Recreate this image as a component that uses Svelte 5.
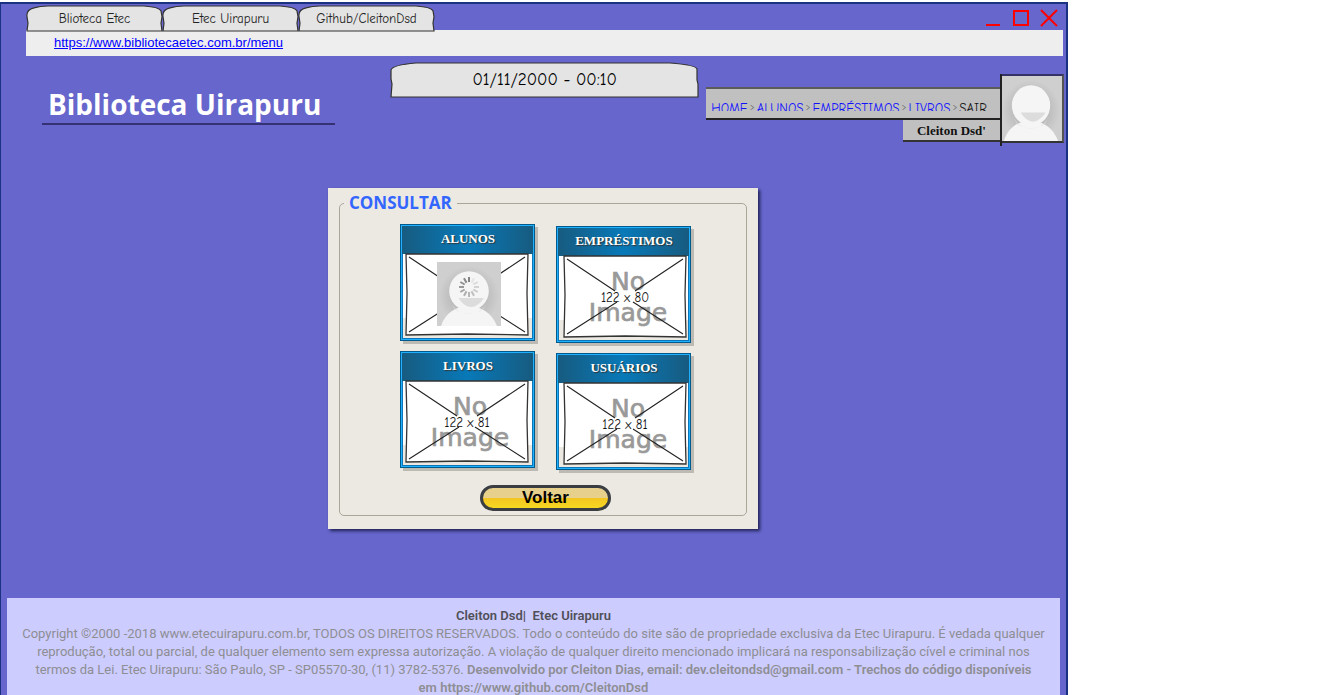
<script>
  const tabs = ['Blioteca Etec', 'Etec Uirapuru', 'Github/CleitonDsd'];
  const links = ['HOME', 'ALUNOS', 'EMPRÉSTIMOS', 'LIVROS'];
  const columns = [
    [
      { title: 'ALUNOS', avatar: true },
      { title: 'LIVROS', size: '122 x 81' }
    ],
    [
      { title: 'EMPRÉSTIMOS', size: '122 x 80' },
      { title: 'USUÁRIOS', size: '122 x 81' }
    ]
  ];
  const spokes = [0, 1, 2, 3, 4, 5, 6, 7, 8, 9, 10, 11];
</script>

{#snippet person(loading)}
  <svg class="person" viewBox="0 0 64 64" preserveAspectRatio="none" aria-hidden="true">
    <defs>
      <radialGradient id="glow" cx="32" cy="34" r="30" gradientUnits="userSpaceOnUse">
        <stop offset="0.6" stop-color="#bdbdbd" />
        <stop offset="1" stop-color="#cfcfcf" />
      </radialGradient>
    </defs>
    <rect width="64" height="64" fill="url(#glow)" />
    <path d="M4 64C8 51 19 44 31.500 44S55 51 60 64Z" fill="#f5f5f5" />
    <path d="M13 38A20 20 0 0 0 51 38L47 47Q32 56 17 47Z" fill="#dedede" opacity=".6" />
    <circle cx="32" cy="29" r="19.800" fill="#f5f5f5" />
    <path d="M21.500 36H47C43 42 38 45 34 45S25 42 21.500 36Z" fill="#dcdcdc" />
    {#if loading}
      {#each spokes as i}
        <rect x="31" y="15" width="2" height="5" fill="#666" opacity={i === 0 ? 0.8 : 0.05 + i * 0.065} transform={`rotate(${i * 30} 32 25)`} />
      {/each}
    {/if}
  </svg>
{/snippet}

<div class="window">
  <div class="titlebar">
    <div class="tabs">
      {#each tabs as tab}
        <button class="tab">
          <svg viewBox="0 0 137 28" preserveAspectRatio="none" aria-hidden="true">
            <path d="M1 27L2 19L1 12Q0 5 8 3Q14 1 22 1L118 1Q133 2 135 6L136 12L135 19L136 27Z" />
          </svg>
          <span>{tab}</span>
        </button>
      {/each}
    </div>
    <div class="controls">
      <button aria-label="Minimizar"><svg viewBox="0 0 18 18"><path d="M2 16H16" /></svg></button>
      <button aria-label="Maximizar"><svg viewBox="0 0 18 18"><path d="M2 2H16V16H2Z" /></svg></button>
      <button aria-label="Fechar"><svg viewBox="0 0 18 18"><path d="M1 1L17 17M17 1L1 17" /></svg></button>
    </div>
  </div>
  <div class="address"><a href="#menu">https://www.bibliotecaetec.com.br/menu</a></div>

  <header>
    <h1>Biblioteca Uirapuru</h1>
    <div class="clock">
      <svg viewBox="0 0 309 36" preserveAspectRatio="none" aria-hidden="true">
        <path d="M1 35L2 22L1 17L1 8Q2 3 26 1L280 1Q306 3 307 7L307 18L308 22L308 35Z" />
      </svg>
      <time>01/11/2000 - 00:10</time>
    </div>
    <div class="user">
      <div class="userinfo">
        <nav>
          <div class="trail">
            {#each links as link}<a href={'#' + link.toLowerCase()}>{link}</a><i>&gt;</i>{/each}<a class="exit" href="#sair">SAIR</a>
          </div>
        </nav>
        <strong>Cleiton Dsd'</strong>
      </div>
      <div class="photo">{@render person(false)}</div>
    </div>
  </header>

  <main>
    <section class="panel">
      <fieldset>
        <legend>CONSULTAR</legend>
        <div class="columns">
          {#each columns as column}
            <div class="column">
              {#each column as card}
                <a class="card" href={'#' + card.title.toLowerCase()}>
                  <h2>{card.title}</h2>
                  <div class="picture">
                    <svg class="frame" viewBox="0 0 124 84" aria-hidden="true">
                      <path class="edge" d="M1 1H123L122 40L123 82L62 81L1 82L2 40Z" />
                      {#if !card.avatar}
                        <text class="big" x="65" y="35">No</text>
                        <text class="big" x="65" y="66">Image</text>
                      {/if}
                      <path class="cross" d="M4 4L52 36M120 4L72 36M4 79L54 47M120 79L70 47" />
                      {#if card.size}<text class="size" x="62" y="47">{card.size}</text>{/if}
                    </svg>
                    {#if card.avatar}<div class="thumb">{@render person(true)}</div>{/if}
                  </div>
                </a>
              {/each}
            </div>
          {/each}
        </div>
        <button class="back">Voltar</button>
      </fieldset>
    </section>
  </main>

  <footer>
    <b class="owner">Cleiton Dsd| &nbsp;Etec Uirapuru</b><br />
    Copyright ©2000 -2018 www.etecuirapuru.com.br, TODOS OS DIREITOS RESERVADOS. Todo o conteúdo do site são de propriedade exclusiva da Etec Uirapuru. É vedada qualquer<br />
    reprodução, total ou parcial, de qualquer elemento sem expressa autorização. A violação de qualquer direito mencionado implicará na responsabilização cível e criminal nos<br />
    termos da Lei. Etec Uirapuru: São Paulo, SP - SP05570-30, (11) 3782-5376. <b>Desenvolvido por Cleiton Dias, email: dev.cleitondsd@gmail.com - Trechos do código disponíveis<br />
    em https://www.github.com/CleitonDsd</b>
  </footer>
</div>

<style>
  :global(body) {
    background: #fff;
    overflow: hidden;
  }
  * {
    box-sizing: border-box;
  }
  button {
    padding: 0;
    border: 0;
    background: none;
  }
  .window {
    width: 80.6vw;
    height: calc(100vh - 2px);
    margin-top: 2px;
    overflow: hidden;
    display: flex;
    flex-direction: column;
    background: #6666cc;
    border: 2px solid #1b3283;
    border-left-width: 1px;
    border-bottom: 0;
    font-family: 'Comic Sans MS', 'Comic Neue', 'Open Sans', sans-serif;
  }
  .titlebar {
    display: flex;
    justify-content: space-between;
    padding: 1px 8px 0 25px;
    margin-bottom: -2px;
    position: relative;
    z-index: 1;
  }
  .tabs {
    display: flex;
  }
  .tab {
    position: relative;
    width: 137px;
    height: 27px;
    margin-right: -1px;
    font: 13px/26px 'Comic Sans MS', 'Comic Neue', 'Open Sans', sans-serif;
    color: #222;
  }
  .tab svg,
  .clock svg {
    position: absolute;
    inset: 0;
    width: 100%;
    height: 100%;
    fill: #e4e4e4;
    stroke: #333;
    stroke-width: 1.2;
  }
  .tab span,
  .clock time {
    position: relative;
  }
  .controls {
    display: flex;
    gap: 10px;
    padding-top: 4px;
  }
  .controls button {
    width: 18px;
    height: 18px;
  }
  .controls svg {
    display: block;
    fill: none;
    stroke: #f00;
    stroke-width: 2;
  }
  .address {
    height: 26px;
    flex: none;
    margin: 0 3px 0 25px;
    padding-left: 28px;
    background: #eee;
    font: 13px/26px 'Liberation Sans', Arial, sans-serif;
  }
  .address a {
    color: #00f;
  }
  header {
    display: flex;
    align-items: flex-start;
    justify-content: space-between;
    padding: 6px 2px 0 41px;
  }
  h1 {
    width: 293px;
    height: 38px;
    margin: 25px 0 0;
    padding-left: 6px;
    border-bottom: 2px solid #343272;
    font: bold 28px/34px 'Open Sans', sans-serif;
    color: #fff;
    white-space: nowrap;
  }
  .clock {
    position: relative;
    width: 309px;
    height: 36px;
    margin-left: 48px;
    text-align: center;
    font-size: 17px;
    line-height: 36px;
    color: #000;
  }
  .user {
    display: flex;
    padding-top: 12px;
  }
  .userinfo {
    display: flex;
    flex-direction: column;
    align-items: flex-end;
    padding-top: 13px;
  }
  nav {
    height: 33px;
    padding: 10px 13px 0 5px;
    background: #c0c0c0;
    border-top: 2px solid #5b5b5b;
    border-bottom: 2px solid #222;
  }
  .trail {
    display: flex;
    align-items: flex-start;
    height: 12px;
    overflow: hidden;
    font-size: 13px;
    line-height: 19px;
  }
  .trail a {
    color: #11f;
    text-decoration: none;
  }
  .trail i {
    width: 9px;
    text-align: center;
    font-style: normal;
    font-size: 9px;
    line-height: 17px;
    color: #666;
  }
  .trail a.exit {
    color: #111;
  }
  .userinfo strong {
    width: 97px;
    height: 22px;
    background: #c0c0c0;
    border-bottom: 2px solid #333;
    text-align: center;
    font: bold 13px/22px 'Liberation Serif', serif;
    color: #111;
  }
  .photo {
    position: relative;
    height: 69px;
    width: 64px;
    border: 2px solid #555;
    border-top-color: #343266;
    border-bottom-color: #333;
    border-left: 0;
  }
  .photo::before {
    content: '';
    position: absolute;
    left: 0;
    top: -2px;
    bottom: -5px;
    width: 2px;
    background: #222;
  }
  .person {
    display: block;
    width: 100%;
    height: 100%;
  }
  main {
    display: flex;
    justify-content: center;
    padding: 45px 0 69px 19px;
  }
  .panel {
    width: 430px;
    padding: 5px 11px 13px;
    background: #ece9e2;
    box-shadow: 2px 2px 3px #222255;
  }
  fieldset {
    display: flex;
    flex-direction: column;
    align-items: center;
    margin: 0;
    padding: 11px 0 4px;
    border: 1px solid #aaa799;
    border-radius: 5px;
  }
  legend {
    margin-left: 4px;
    padding: 0 5px;
    font: bold 17px/20px 'Open Sans', sans-serif;
    color: #3366ff;
  }
  .columns {
    display: flex;
    gap: 21px;
    padding-left: 6px;
  }
  .column {
    display: flex;
    flex-direction: column;
    gap: 10px;
  }
  .column + .column {
    padding-top: 2px;
  }
  .card {
    width: 135px;
    height: 117px;
    border: 1px solid #005a8c;
    padding: 1px;
    background: linear-gradient(#fff 93px, #ece9e2 93px);
    box-shadow:
      inset 0 0 0 1px #1fb0ff,
      inset 0 0 0 2px #0b76b8,
      3px 3px 0 #bdbab4;
    text-decoration: none;
  }
  h2 {
    height: 28px;
    margin: 0;
    background: linear-gradient(90deg, #175b80, #0879b8 50%, #175b80);
    text-align: center;
    font: bold 13px/26px 'Liberation Serif', serif;
    color: #fff;
    text-shadow: 1px 1px 1px #333;
  }
  .picture {
    position: relative;
    margin: -1px 0 0 3px;
  }
  .column + .column .picture {
    margin-left: 5px;
  }
  .frame {
    display: block;
    width: 124px;
    height: 84px;
  }
  .edge {
    fill: #fff;
    stroke: #333;
    stroke-width: 1.3;
  }
  .cross {
    stroke: #222;
    stroke-width: 1.1;
  }
  .big {
    font: 25px 'DejaVu Sans', sans-serif;
    fill: #999;
    stroke: #999;
    stroke-width: 0.7;
    text-anchor: middle;
  }
  .size {
    font: 13px 'Comic Sans MS', 'Comic Neue', 'Open Sans', sans-serif;
    fill: #111;
    text-anchor: middle;
  }
  .thumb {
    position: absolute;
    left: 32px;
    top: 9px;
    width: 64px;
    height: 64px;
  }
  .back {
    width: 131px;
    height: 26px;
    margin: 15px 0 0 5px;
    border: 3px solid #3a3d42;
    border-radius: 13px;
    background: linear-gradient(#e6d08c 50%, #f3c522 50%, #f6d822);
    font: bold 17px/20px 'Liberation Sans', Arial, sans-serif;
    color: #000;
  }
  footer {
    flex: 1 0 auto;
    margin: 0 6px;
    padding-top: 9px;
    background: #ccccff;
    text-align: center;
    font: 13px/18px 'Trebuchet MS', Roboto, sans-serif;
    color: #8e8e93;
    white-space: nowrap;
  }
  footer .owner {
    color: #505058;
  }
  footer b {
    font-weight: 600;
  }
</style>
